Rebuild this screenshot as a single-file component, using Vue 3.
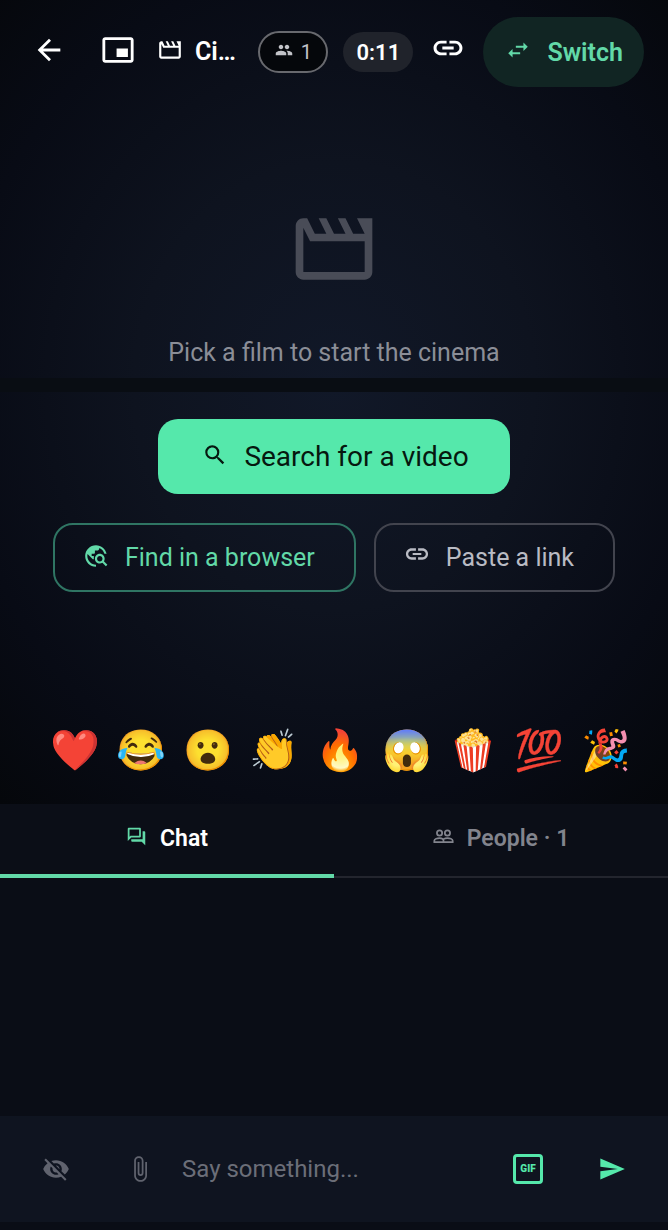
<script setup>
import { ref } from "vue";

const message = ref("");
const activeTab = ref("chat");

const reactions = ["❤️", "😂", "😮", "👏", "🔥", "😱", "🍿", "💯", "🎉"];

const icons = {
  back: "M20 11H7.83l5.59-5.59L12 4l-8 8 8 8 1.41-1.41L7.83 13H20v-2z",
  pip: "M19 11h-8v6h8v-6zm4 8V5c0-1.1-.9-2-2-2H3c-1.1 0-2 .9-2 2v14c0 1.1.9 2 2 2h18c1.1 0 2-.9 2-2zm-2 .02H3V4.97h18v14.05z",
  film: "m18 4 2 4h-3l-2-4h-2l2 4h-3l-2-4H8l2 4H7L5 4H4c-1.1 0-1.99.9-1.99 2L2 18c0 1.1.9 2 2 2h16c1.1 0 2-.9 2-2V4h-4zM4 18V6.47L5.76 10H20v8H4z",
  people:
    "M16 11c1.66 0 2.99-1.34 2.99-3S17.66 5 16 5c-1.66 0-3 1.34-3 3s1.34 3 3 3zm-8 0c1.66 0 2.99-1.34 2.99-3S9.66 5 8 5C6.34 5 5 6.34 5 8s1.34 3 3 3zm0 2c-2.33 0-7 1.17-7 3.5V19h14v-2.5c0-2.33-4.67-3.5-7-3.5zm8 0c-.29 0-.62.02-.97.05 1.16.84 1.97 1.97 1.97 3.45V19h6v-2.5c0-2.33-4.67-3.5-7-3.5z",
  link: "M3.9 12c0-1.710 1.390-3.100 3.100-3.100h4V6.800H7c-2.820 0-5.200 2.300-5.200 5.200s2.380 5.200 5.200 5.200h4v-2.100H7c-1.710 0-3.100-1.390-3.100-3.100zM8 13h8v-2H8v2zm9-6.200h-4v2.100h4c1.710 0 3.100 1.390 3.100 3.100s-1.390 3.100-3.100 3.100h-4v2.100h4c2.820 0 5.200-2.300 5.200-5.200s-2.380-5.200-5.200-5.200z",
  swap: "M6.99 11 3 15l3.99 4v-3H14v-2H6.99v-3zM21 9l-3.99-4v3H10v2h7.01v3L21 9z",
  search:
    "M15.5 14h-.79l-.28-.27A6.471 6.471 0 0 0 16 9.5 6.5 6.5 0 1 0 9.5 16c1.61 0 3.09-.59 4.23-1.57l.27.28v.79l5 4.99L20.49 19l-4.99-5zm-6 0C7.01 14 5 11.99 5 9.5S7.01 5 9.5 5 14 7.01 14 9.5 11.99 14 9.5 14z",
  explore:
    "M19.3 16.9c.4-.7.7-1.5.7-2.4 0-2.5-2-4.5-4.5-4.5S11 12 11 14.5s2 4.5 4.5 4.5c.9 0 1.7-.3 2.4-.7l3.2 3.2 1.4-1.4-3.2-3.2zm-3.8.1c-1.4 0-2.5-1.1-2.5-2.5s1.1-2.5 2.5-2.5 2.5 1.1 2.5 2.5-1.1 2.5-2.5 2.5zM12 20v2C6.48 22 2 17.52 2 12S6.48 2 12 2c4.84 0 8.87 3.44 9.8 8h-2.07A8.01 8.01 0 0 0 15 4.59V5c0 1.1-.9 2-2 2h-2v2c0 .55-.45 1-1 1H8v2h2v3H9l-4.79-4.79C4.08 10.79 4 11.38 4 12c0 4.41 3.59 8 8 8z",
  forum:
    "M15 4v7H5.17L4 12.17V4h11m1-2H3c-.55 0-1 .45-1 1v14l4-4h10c.55 0 1-.45 1-1V3c0-.55-.45-1-1-1zm5 4h-2v9H6v2c0 .55.45 1 1 1h11l4 4V7c0-.55-.45-1-1-1z",
  hidden:
    "M12 7c2.76 0 5 2.24 5 5 0 .65-.13 1.26-.36 1.83l2.92 2.92c1.51-1.26 2.7-2.89 3.43-4.75-1.73-4.39-6-7.5-11-7.5-1.4 0-2.74.25-3.98.7l2.16 2.16C10.74 7.13 11.35 7 12 7zM2 4.27l2.28 2.28.46.46A11.804 11.804 0 0 0 1 12c1.73 4.39 6 7.5 11 7.5 1.55 0 3.03-.3 4.38-.84l.42.42L19.73 22 21 20.73 3.27 3 2 4.27zM7.53 9.8l1.55 1.55c-.05.21-.08.43-.08.65 0 1.66 1.34 3 3 3 .22 0 .44-.03.65-.08l1.55 1.55c-.67.33-1.41.53-2.2.53-2.76 0-5-2.24-5-5 0-.79.2-1.53.53-2.2zm4.31-.78 3.15 3.15.02-.16c0-1.66-1.34-3-3-3l-.17.01z",
  attach:
    "M16.5 6v11.5c0 2.21-1.79 4-4 4s-4-1.79-4-4V5a2.5 2.5 0 0 1 5 0v10.5c0 .55-.45 1-1 1s-1-.45-1-1V6H10v9.5a2.5 2.5 0 0 0 5 0V5c0-2.21-1.79-4-4-4S7 2.79 7 5v12.5c0 3.04 2.46 5.5 5.5 5.5s5.5-2.46 5.5-5.5V6h-1.5z",
  send: "M2.01 21 23 12 2.01 3 2 10l15 2-15 2z",
};
</script>

<template>
  <div class="room">
    <section class="stage">
      <header class="topbar">
        <button class="icon-button" type="button" aria-label="Back">
          <svg class="icon icon-lg" viewBox="0 0 24 24" aria-hidden="true"><path :d="icons.back" /></svg>
        </button>
        <button class="icon-button" type="button" aria-label="Picture in picture">
          <svg class="icon icon-lg" viewBox="0 0 24 24" aria-hidden="true"><path :d="icons.pip" /></svg>
        </button>
        <div class="room-title">
          <svg class="icon icon-md" viewBox="0 0 24 24" aria-hidden="true"><path :d="icons.film" /></svg>
          <h1 class="room-name">Ci…</h1>
        </div>
        <button class="pill pill-outline" type="button">
          <svg class="icon icon-sm" viewBox="0 0 24 24" aria-hidden="true"><path :d="icons.people" /></svg>
          <span>1</span>
        </button>
        <span class="pill pill-timer">0:11</span>
        <button class="link-button" type="button" aria-label="Copy link">
          <svg class="icon icon-lg icon-link" viewBox="0 0 24 24" aria-hidden="true"><path :d="icons.link" /></svg>
        </button>
        <button class="switch-button" type="button">
          <svg class="icon icon-md" viewBox="0 0 24 24" aria-hidden="true"><path :d="icons.swap" /></svg>
          <span>Switch</span>
        </button>
      </header>

      <div class="empty">
        <svg class="empty-icon" viewBox="0 0 24 24" aria-hidden="true"><path :d="icons.film" /></svg>
        <p class="empty-text">Pick a film to start the cinema</p>
      </div>

      <div class="band"></div>

      <div class="actions">
        <button class="button button-primary" type="button">
          <svg class="icon icon-md" viewBox="0 0 24 24" aria-hidden="true"><path :d="icons.search" /></svg>
          <span>Search for a video</span>
        </button>
        <div class="actions-row">
          <button class="button button-accent" type="button">
            <svg class="icon icon-md" viewBox="0 0 24 24" aria-hidden="true"><path :d="icons.explore" /></svg>
            <span>Find in a browser</span>
          </button>
          <button class="button button-muted" type="button">
            <svg class="icon icon-md icon-link" viewBox="0 0 24 24" aria-hidden="true"><path :d="icons.link" /></svg>
            <span>Paste a link</span>
          </button>
        </div>
      </div>

      <div class="reactions">
        <button v-for="emoji in reactions" :key="emoji" class="reaction" type="button">{{ emoji }}</button>
      </div>
    </section>

    <nav class="tabs" role="tablist">
      <button
        class="tab"
        :class="{ active: activeTab === 'chat' }"
        type="button"
        role="tab"
        :aria-selected="activeTab === 'chat'"
        @click="activeTab = 'chat'"
      >
        <svg class="icon tab-icon" viewBox="0 0 24 24" aria-hidden="true"><path :d="icons.forum" /></svg>
        <span>Chat</span>
      </button>
      <button
        class="tab"
        :class="{ active: activeTab === 'people' }"
        type="button"
        role="tab"
        :aria-selected="activeTab === 'people'"
        @click="activeTab = 'people'"
      >
        <svg class="icon tab-icon tab-icon-line" viewBox="0 0 24 24" aria-hidden="true">
          <circle cx="7.5" cy="8" r="3" />
          <circle cx="16.5" cy="8" r="3" />
          <path d="M1.5 18.5v-1.7c0-1.8 3.3-3 6-3s4.5 1.2 4.5 3v1.7zM12 18.5h10.5v-1.7c0-1.8-3.3-3-6-3-1.7 0-3.3.4-4.5 1.2" />
        </svg>
        <span>People · 1</span>
      </button>
    </nav>

    <main class="messages"></main>

    <form class="composer" @submit.prevent="message = ''">
      <button class="composer-button" type="button" aria-label="Hide chat">
        <svg class="icon-composer" viewBox="0 0 24 24" aria-hidden="true"><path :d="icons.hidden" /></svg>
      </button>
      <button class="composer-button" type="button" aria-label="Attach file">
        <svg class="icon-composer" viewBox="0 0 24 24" aria-hidden="true"><path :d="icons.attach" /></svg>
      </button>
      <input v-model="message" class="composer-input" type="text" placeholder="Say something..." aria-label="Message" />
      <button class="composer-button accent" type="button">
        <span class="gif">GIF</span>
      </button>
      <button class="composer-button accent" type="submit" aria-label="Send">
        <svg class="icon-composer" viewBox="0 0 24 24" aria-hidden="true"><path :d="icons.send" /></svg>
      </button>
    </form>
  </div>
</template>

<style>
body {
  margin: 0;
  background: #0a0d16;
}
</style>

<style scoped>
.room {
  --accent: #55e8ab;
  --accent-soft: #62d9a8;
  display: flex;
  flex-direction: column;
  min-height: 100vh;
  box-sizing: border-box;
  padding-bottom: 8px;
  background: #0a0d16;
  color: #fff;
  font-family: Roboto, "Liberation Sans", sans-serif;
}

button,
input {
  margin: 0;
  padding: 0;
  border: 0;
  background: transparent;
  color: inherit;
  font: inherit;
}

button {
  display: flex;
  align-items: center;
  justify-content: center;
  cursor: pointer;
}

.icon {
  flex: none;
  fill: currentColor;
  padding-bottom: 4px;
}

.icon-link {
  padding-bottom: 8px;
}

.icon-sm {
  width: 18px;
  height: 18px;
}

.icon-md {
  width: 26px;
  height: 26px;
}

.icon-lg {
  width: 34px;
  height: 34px;
}

.stage {
  display: flex;
  flex-direction: column;
  background: radial-gradient(ellipse 500px 560px at 50% 48%, #111828 0%, #0e131f 40%, #080b15 75%, #05070b 100%);
}

.topbar {
  display: flex;
  align-items: center;
  gap: 15px;
  padding: 17px 24px 16px 15px;
}

.icon-button {
  width: 68px;
  height: 48px;
}

.icon-button + .icon-button {
  margin-left: -14px;
}

.room-title {
  display: flex;
  flex: 1;
  align-items: center;
  gap: 12px;
  min-width: 0;
  margin-left: -10px;
}

.room-name {
  margin: 0;
  overflow: hidden;
  font-size: 25px;
  font-weight: 600;
  line-height: 32px;
  white-space: nowrap;
}

.pill {
  display: flex;
  align-items: center;
  justify-content: center;
  gap: 8px;
  box-sizing: border-box;
  width: 70px;
  height: 42px;
  border-radius: 21px;
}

.pill-outline {
  border: 2px solid #68696e;
  background: #05070b;
  color: #c3c4c9;
  font-size: 20px;
}

.pill-timer {
  height: 40px;
  background: #20232b;
  font-size: 22px;
  font-weight: 600;
}

.link-button {
  width: 40px;
  height: 48px;
}

.switch-button {
  gap: 16px;
  height: 70px;
  padding: 0 21px 0 22px;
  border-radius: 35px;
  background: #112523;
  color: var(--accent-soft);
  font-size: 25px;
  font-weight: 600;
}

.empty {
  display: flex;
  flex-direction: column;
  align-items: center;
  padding: 100px 24px 9px;
}

.empty-icon {
  width: 92px;
  height: 92px;
  fill: #494c57;
}

.empty-text {
  margin: 42px 0 0;
  color: #8b8e97;
  font-size: 25px;
  line-height: 32px;
}

.band {
  height: 14px;
  background: #090d13;
}

.actions {
  display: flex;
  flex-direction: column;
  align-items: center;
  gap: 29px;
  padding: 27px 24px 0;
}

.actions-row {
  display: flex;
  gap: 18px;
}

.button {
  gap: 16px;
  box-sizing: border-box;
  height: 69px;
  padding: 0 39px 0 28px;
  border: 2px solid transparent;
  border-radius: 20px;
  font-size: 25px;
  white-space: nowrap;
}

.button-primary {
  height: 75px;
  padding: 0 39px 0 42px;
  background: var(--accent);
  color: #06180f;
  font-size: 28px;
}

.button-accent {
  border-color: #2f7563;
  color: var(--accent-soft);
}

.button-muted {
  border-color: #42444e;
  color: #b9bbc3;
}

.reactions {
  display: flex;
  padding: 129px 29px 23px 42px;
}

.reaction {
  flex: 1;
  height: 60px;
  font-family: "Noto Color Emoji", sans-serif;
  font-size: 40px;
  line-height: 60px;
}

.tabs {
  display: grid;
  grid-template-columns: 1fr 1fr;
  background: #0b0e17;
}

.tab {
  gap: 13px;
  box-sizing: border-box;
  height: 74px;
  padding-bottom: 3px;
  border-bottom: 2px solid #23252e;
  color: #82848d;
  font-size: 23px;
  font-weight: 600;
}

.tab.active {
  border-color: var(--accent-soft);
  box-shadow: inset 0 -2px var(--accent-soft);
  color: #fff;
}

.tab-icon {
  width: 21px;
  height: 21px;
}

.tab.active .tab-icon {
  fill: var(--accent-soft);
}

.tab-icon-line {
  fill: none;
  stroke: currentColor;
  stroke-width: 2;
}

.messages {
  flex: 1;
}

.composer {
  display: flex;
  align-items: center;
  height: 106px;
  padding: 0 14px;
  background: #0f1420;
}

.composer-button {
  flex: none;
  width: 84px;
  height: 84px;
  color: #60636e;
}

.composer-button.accent {
  color: var(--accent);
}

.icon-composer {
  width: 28px;
  height: 28px;
  fill: currentColor;
}

.composer-input {
  flex: 1;
  min-width: 0;
  height: 48px;
  font-size: 24px;
  outline: 0;
}

.composer-input::placeholder {
  color: #6b6e78;
  opacity: 1;
}

.gif {
  box-sizing: border-box;
  width: 30px;
  height: 30px;
  border: 3px solid currentColor;
  border-radius: 4px;
  font-size: 10px;
  font-weight: 900;
  line-height: 24px;
}
</style>
